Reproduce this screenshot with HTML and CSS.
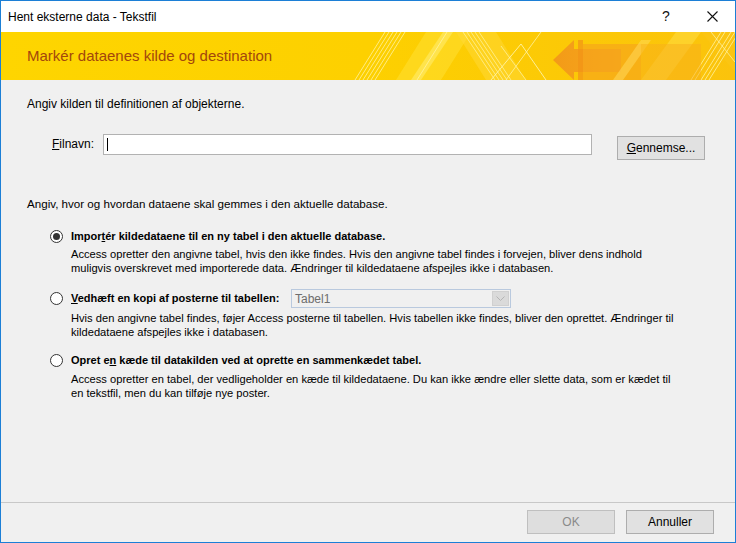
FILE: index.html
```html
<!DOCTYPE html>
<html lang="da">
<head>
<meta charset="utf-8">
<title>Hent eksterne data - Tekstfil</title>
<link rel="stylesheet" href="styles.css">
</head>
<body>
<div class="window">
  <header class="titlebar">
    <span class="title">Hent eksterne data - Tekstfil</span>
    <span class="tb-btn help">?</span>
    <span class="tb-btn close">
      <svg width="11" height="11" viewBox="0 0 11 11"><path d="M0.5 0.5 L10.5 10.5 M10.5 0.5 L0.5 10.5" stroke="#111" stroke-width="1.1" fill="none"/></svg>
    </span>
  </header>

  <div class="banner">
    <svg class="banner-art" width="734" height="48" viewBox="0 0 734 48" preserveAspectRatio="none">
      <defs>
        <linearGradient id="bg" x1="0" y1="0" x2="1" y2="0">
          <stop offset="0" stop-color="#fed500"/>
          <stop offset="0.5" stop-color="#fdd000"/>
          <stop offset="1" stop-color="#fbc30c"/>
        </linearGradient>
        <linearGradient id="arrow" x1="0" y1="0" x2="1" y2="0">
          <stop offset="0" stop-color="#f39a18"/>
          <stop offset="1" stop-color="#f6a91c"/>
        </linearGradient>
      </defs>
      <rect width="734" height="48" fill="url(#bg)"/>
      <!-- broad light bands -->
      <polygon points="395,48 425,0 470,0 440,48" fill="#ffe033" opacity="0.55"/>
      <polygon points="410,48 442,0 452,0 420,48" fill="#fff07a" opacity="0.5"/>
      <polygon points="455,0 495,0 525,48 485,48" fill="#ffd93a" opacity="0.5"/>
      <polygon points="640,48 675,0 700,0 665,48" fill="#ffe04a" opacity="0.5"/>
      <polygon points="700,0 734,0 734,40" fill="#fcc618" opacity="0.6"/>
      <!-- thin stripes / -->
      <g stroke="#fff3a0" stroke-width="1" opacity="0.8">
        <line x1="354" y1="48" x2="384" y2="0"/>
        <line x1="358" y1="48" x2="388" y2="0"/>
        <line x1="362" y1="48" x2="392" y2="0"/>
        <line x1="366" y1="48" x2="396" y2="0"/>
        <line x1="370" y1="48" x2="400" y2="0"/>
        <line x1="374" y1="48" x2="404" y2="0"/>
        <line x1="416" y1="48" x2="446" y2="0"/>
        <line x1="505" y1="48" x2="540" y2="0"/>
        <line x1="690" y1="48" x2="720" y2="0"/>
        <line x1="694" y1="48" x2="724" y2="0"/>
        <line x1="700" y1="48" x2="730" y2="0"/>
        <line x1="704" y1="48" x2="734" y2="0"/>
        <line x1="708" y1="48" x2="738" y2="0"/>
      </g>
      <!-- thin stripes \ -->
      <g stroke="#fff3a0" stroke-width="1" opacity="0.75">
        <line x1="462" y1="0" x2="494" y2="48"/>
        <line x1="466" y1="0" x2="498" y2="48"/>
        <line x1="470" y1="0" x2="502" y2="48"/>
        <line x1="474" y1="0" x2="506" y2="48"/>
        <line x1="478" y1="0" x2="510" y2="48"/>
        <line x1="500" y1="14" x2="525" y2="48"/>
        <line x1="710" y1="0" x2="734" y2="30"/>
      </g>
      <line x1="490" y1="48" x2="520" y2="12" stroke="#fff6b0" stroke-width="1" opacity="0.85"/>
      <line x1="520" y1="12" x2="545" y2="48" stroke="#fff6b0" stroke-width="1" opacity="0.85"/>
      <!-- arrow -->
      <polygon points="552,28 573,8 573,17 620,17 620,40 573,40 573,48" fill="url(#arrow)"/>
      <rect x="577" y="8" width="5" height="40" fill="#f29317" opacity="0.7"/>
      <polygon points="582,12 640,12 640,48 582,48" fill="#f6a41b" opacity="0.65"/>
      <polygon points="612,48 640,8 650,8 622,48" fill="#ffd85a" opacity="0.55"/>
      <polygon points="640,12 700,12 700,48 640,48" fill="#f8ae1c" opacity="0.5"/>
    </svg>
    <h1 class="banner-title">Markér dataenes kilde og destination</h1>
  </div>

  <main class="content">
    <p class="intro">Angiv kilden til definitionen af objekterne.</p>

    <div class="file-row">
      <label class="file-label"><u>F</u>ilnavn:</label>
      <div class="file-input"><span class="caret"></span></div>
      <button class="btn browse"><u>G</u>ennemse...</button>
    </div>

    <p class="intro second">Angiv, hvor og hvordan dataene skal gemmes i den aktuelle database.</p>

    <div class="option opt1">
      <div class="opt-row">
        <span class="radio checked"></span>
        <span class="opt-label">Impor<u>t</u>ér kildedataene til en ny tabel i den aktuelle database.</span>
      </div>
      <p class="desc">Access opretter den angivne tabel, hvis den ikke findes. Hvis den angivne tabel findes i forvejen, bliver dens indhold<br>muligvis overskrevet med importerede data. Ændringer til kildedataene afspejles ikke i databasen.</p>
    </div>

    <div class="option opt2">
      <div class="opt-row tall">
        <span class="radio"></span>
        <span class="opt-label fixed"><u>V</u>edhæft en kopi af posterne til tabellen:</span>
        <div class="select">
          <span class="select-text">Tabel1</span>
          <span class="select-arrow"><svg width="9" height="5" viewBox="0 0 9 5"><path d="M0.5 0.5 L4.5 4.5 L8.5 0.5" stroke="#b4b4b4" fill="none"/></svg></span>
        </div>
      </div>
      <p class="desc">Hvis den angivne tabel findes, føjer Access posterne til tabellen. Hvis tabellen ikke findes, bliver den oprettet. Ændringer til<br>kildedataene afspejles ikke i databasen.</p>
    </div>

    <div class="option opt3">
      <div class="opt-row">
        <span class="radio"></span>
        <span class="opt-label">Opret e<u>n</u> kæde til datakilden ved at oprette en sammenkædet tabel.</span>
      </div>
      <p class="desc">Access opretter en tabel, der vedligeholder en kæde til kildedataene. Du kan ikke ændre eller slette data, som er kædet til<br>en tekstfil, men du kan tilføje nye poster.</p>
    </div>
  </main>

  <footer class="footer">
    <button class="btn disabled">OK</button>
    <button class="btn">Annuller</button>
  </footer>
</div>
</body>
</html>
```

FILE: styles.css
```css
* { box-sizing: border-box; }

html, body {
  margin: 0;
  padding: 0;
  background: #f0f0f0;
}

body {
  font-family: "Liberation Sans", Arial, sans-serif;
  font-size: 12px;
  color: #000;
}

.window {
  width: 736px;
  height: 543px;
  border: 1px solid #1c7fd6;
  display: flex;
  flex-direction: column;
  background: #f0f0f0;
  overflow: hidden;
}

/* title bar */
.titlebar {
  height: 31px;
  flex: none;
  background: #fff;
  display: flex;
  align-items: center;
}

.title {
  flex: 1;
  padding-left: 7px;
  font-size: 12px;
  color: #000;
}

.tb-btn {
  width: 46px;
  height: 31px;
  display: flex;
  align-items: center;
  justify-content: center;
}

.help {
  font-size: 14px;
  color: #111;
  padding-bottom: 2px;
}

.close svg { display: block; }

/* banner */
.banner {
  position: relative;
  height: 48px;
  flex: none;
  display: flex;
  align-items: center;
  padding-left: 26px;
}

.banner-art {
  position: absolute;
  left: 0;
  top: 0;
  display: block;
}

.banner-title {
  position: relative;
  margin: 0;
  font-weight: normal;
  font-size: 15px;
  color: #a3470c;
  padding-bottom: 1px;
}

/* content */
.content {
  flex: 1;
  padding: 0 0 0 26px;
}

p { margin: 0; }

.intro {
  margin-top: 17px;
  line-height: 15px;
}

.intro.second {
  margin-top: 37px;
  font-size: 11.6px;
}

.file-row {
  margin-top: 22px;
  display: flex;
  align-items: flex-start;
  height: 25px;
}

.file-label {
  width: 76px;
  padding-left: 25px;
  line-height: 21px;
}

.file-input {
  width: 489px;
  height: 21px;
  background: #fff;
  border: 1px solid #b2b2b2;
  padding: 3px 0 0 3px;
}

.caret {
  display: block;
  width: 1px;
  height: 13px;
  background: #000;
}

.btn {
  font-family: "Liberation Sans", Arial, sans-serif;
  font-size: 12px;
  color: #000;
  width: 88px;
  height: 24px;
  background: #e1e1e1;
  border: 1px solid #adadad;
  padding: 0;
  margin: 0;
}

.btn.browse {
  margin-left: 25px;
  margin-top: 2px;
}

.btn.disabled {
  background: #dedede;
  border-color: #bfbfbf;
  color: #8a8a8a;
}

/* options */
.option {
  padding-left: 23px;
}

.opt1 { margin-top: 18px; }
.opt2 { margin-top: 14px; }
.opt3 { margin-top: 14px; }

.opt-row {
  display: flex;
  align-items: center;
  height: 15px;
}

.opt-row.tall {
  height: 19px;
}

.radio {
  width: 13px;
  height: 13px;
  border: 1px solid #333;
  border-radius: 50%;
  background: #fff;
  margin-right: 8px;
  flex: none;
  display: flex;
  align-items: center;
  justify-content: center;
}

.radio.checked::after {
  content: "";
  width: 7px;
  height: 7px;
  border-radius: 50%;
  background: #333;
}

.opt-label {
  font-weight: bold;
  font-size: 11px;
  line-height: 15px;
  white-space: nowrap;
}

.opt-label.fixed {
  width: 220px;
  flex: none;
}

.select {
  width: 220px;
  height: 19px;
  border: 1px solid #b9c9de;
  background: #f0f0f0;
  display: flex;
  align-items: center;
  padding: 1px;
}

.select-text {
  flex: 1;
  color: #6d6d6d;
  padding-left: 2px;
}

.select-arrow {
  width: 17px;
  height: 15px;
  background: #dadada;
  border: 1px solid #d0d0d0;
  display: flex;
  align-items: center;
  justify-content: center;
}

.select-arrow svg { display: block; }

.desc {
  margin-left: 21px;
  font-size: 11.15px;
  line-height: 14px;
  white-space: nowrap;
}

.opt1 .desc { margin-top: 3px; }
.opt2 .desc { margin-top: 3px; }
.opt3 .desc { margin-top: 4px; }

/* footer */
.footer {
  flex: none;
  height: 40px;
  border-top: 1px solid #c8c8c8;
  display: flex;
  justify-content: flex-end;
  align-items: flex-start;
  gap: 11px;
  padding: 7px 21px 0 0;
}
```
